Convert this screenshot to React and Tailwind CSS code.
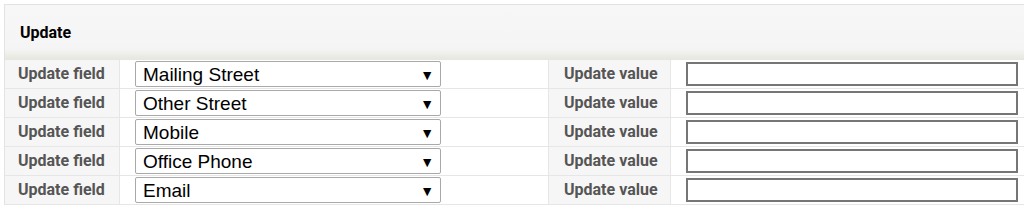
import React from 'react';

const FIELDS = ['Mailing Street', 'Other Street', 'Mobile', 'Office Phone', 'Email'];

const FieldSelect = ({ value }) => (
  <div className="relative flex h-[26px] w-[306px] items-center rounded-[2px] border border-[#a9a9a9] bg-white pl-[7px] font-['Liberation_Sans',Arial,sans-serif] text-[19px] leading-none text-black">
    {value}
    <span className="absolute right-[6px] top-[6px] text-[14px] leading-none">▼</span>
  </div>
);

export default function App() {
  return (
    <div className="w-[1024px] bg-white pt-[4px] pl-[4px] font-['Roboto',Arial,sans-serif]">
      <div className="border-t border-l border-[#e3e3e3]">
        <div className="flex h-[55px] items-center bg-gradient-to-b from-[#f7f7f7] via-[#f5f5f5] via-80% to-[#e6e6de] pl-[15px] text-[16px] font-bold text-black">
          Update
        </div>
        {FIELDS.map((f) => (
          <div key={f} className="flex h-[29px] border-b border-[#e6e6e6]">
            <div className="flex w-[115px] items-center border-r border-[#e6e6e6] bg-[#f6f6f6] pl-[13px] text-[16px] font-bold text-[#555]">
              Update field
            </div>
            <div className="flex w-[428px] items-center pl-[15px]">
              <FieldSelect value={f} />
            </div>
            <div className="flex w-[123px] items-center border-x border-[#e6e6e6] bg-[#f6f6f6] pl-[15px] text-[16px] font-bold text-[#555]">
              Update value
            </div>
            <div className="flex flex-1 items-center pl-[15px]">
              <div className="h-[24px] w-[332px] border-2 border-[#767676] bg-white" />
            </div>
          </div>
        ))}
      </div>
    </div>
  );
}
